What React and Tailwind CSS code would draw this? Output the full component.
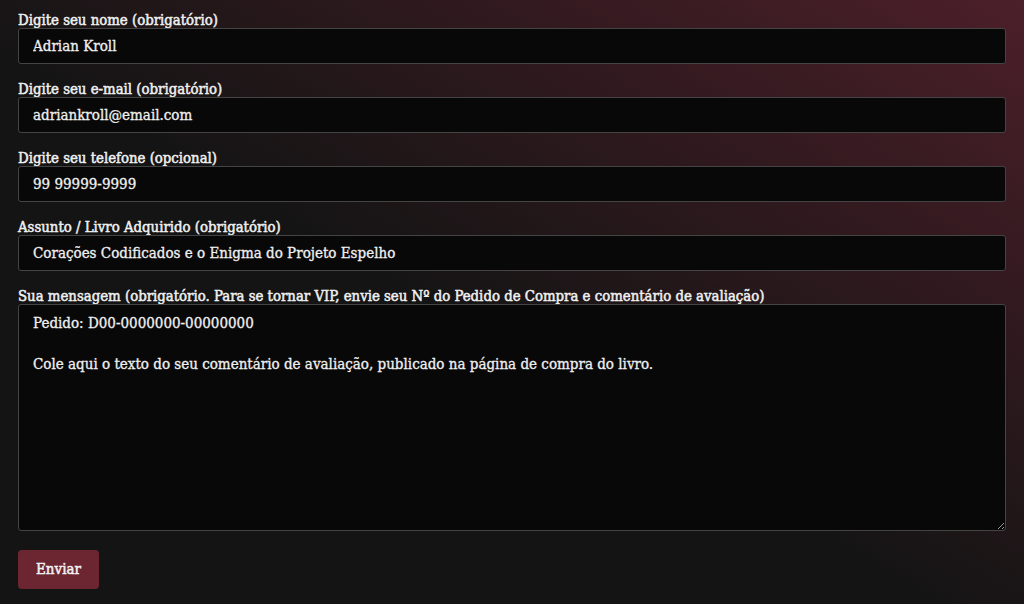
export default function App() {
  const font = "font-['DejaVu_Serif_Condensed','DejaVu_Serif',serif] [-webkit-text-stroke:0.3px_currentColor]";
  const field = `w-full h-[36px] bg-[#080808] border border-[#444] rounded-[3px] px-[14px] text-[15px] text-[#f0f0f0] outline-none ${font}`;
  const label = 'block text-[14.8px] text-[#f0f0f0] leading-[16px] [-webkit-text-stroke:0.5px_currentColor]';

  return (
    <div
      className={`w-[1024px] h-[604px] overflow-hidden bg-[linear-gradient(to_top_right,#141414_45%,#4c1f29)] px-[18px] pt-[12px] ${font}`}
    >
      <form className="flex flex-col w-[988px]" onSubmit={(e) => e.preventDefault()}>
        <label className={label}>Digite seu nome (obrigatório)</label>
        <input className={field} defaultValue="Adrian Kroll" />

        <label className={`${label} mt-[17px]`}>Digite seu e-mail (obrigatório)</label>
        <input className={field} defaultValue="adriankroll@email.com" />

        <label className={`${label} mt-[17px]`}>Digite seu telefone (opcional)</label>
        <input className={field} defaultValue="99 99999-9999" />

        <label className={`${label} mt-[17px]`}>Assunto / Livro Adquirido (obrigatório)</label>
        <input className={field} defaultValue="Corações Codificados e o Enigma do Projeto Espelho" />

        <label className={`${label} mt-[17px]`}>
          Sua mensagem (obrigatório. Para se tornar VIP, envie seu Nº do Pedido de Compra e comentário de avaliação)
        </label>
        <textarea
          className={`w-full h-[227px] bg-[#080808] border border-[#444] rounded-[3px] px-[14px] pt-[8px] text-[15px] leading-[20.5px] text-[#f0f0f0] outline-none ${font}`}
          defaultValue={'Pedido: D00-0000000-00000000\n\nCole aqui o texto do seu comentário de avaliação, publicado na página de compra do livro.'}
        />

        <div className="mt-[19px]">
          <button className={`h-[39px] w-[81px] rounded-[4px] bg-[#6b2631] text-[#f4f4f4] text-[15px] ${font} [-webkit-text-stroke:0.5px_currentColor]`}>Enviar</button>
        </div>
      </form>
    </div>
  );
}
